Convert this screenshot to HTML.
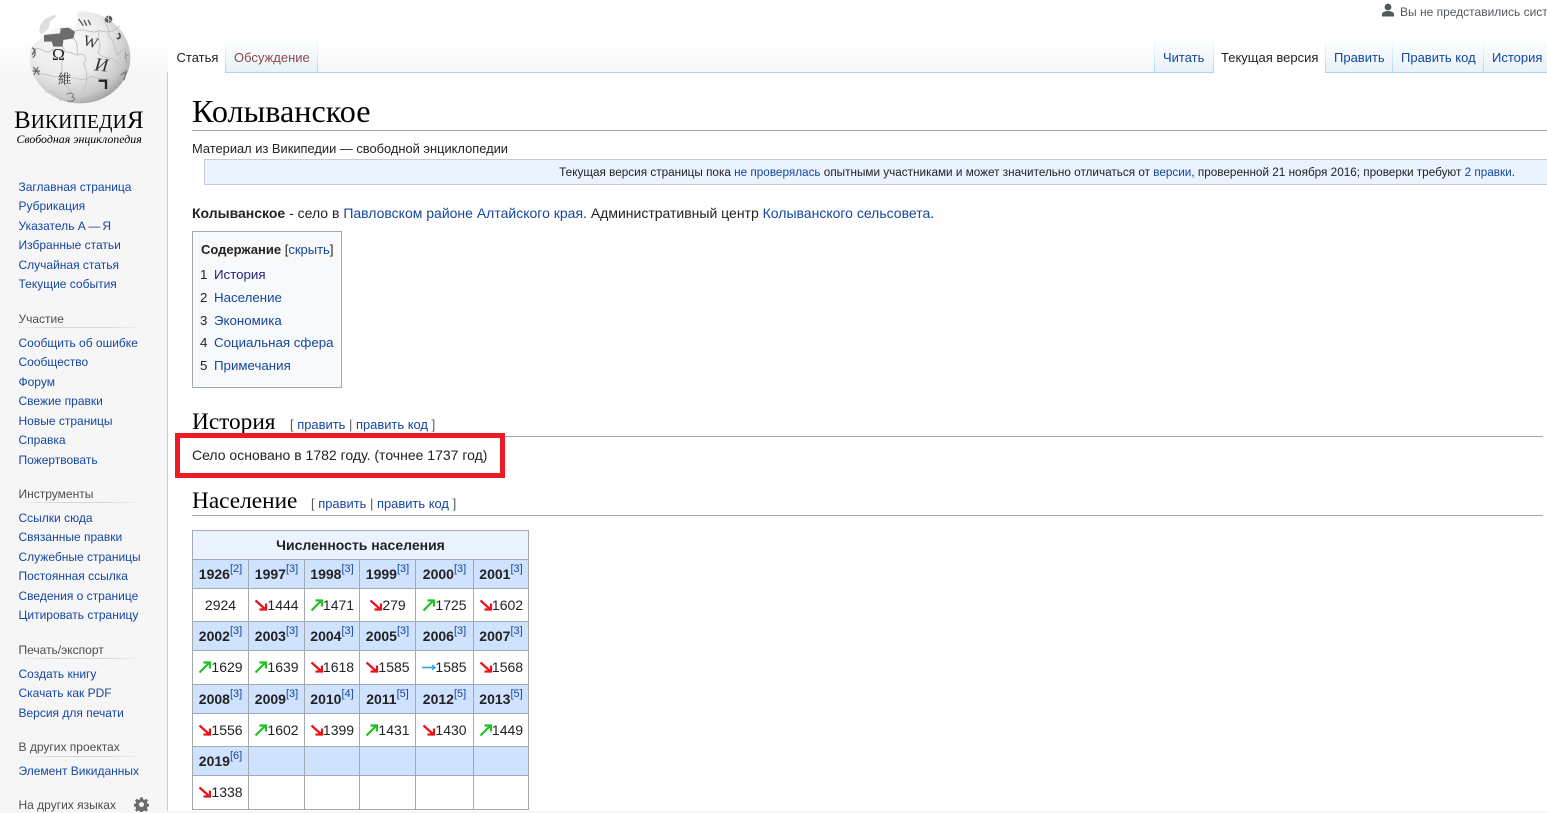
<!DOCTYPE html>
<html lang="ru"><head><meta charset="utf-8"><title>Колыванское — Википедия</title>
<style>
html,body{margin:0;padding:0;width:1547px;height:811px;overflow:hidden;background:#f6f6f6;font-family:"Liberation Sans",Arial,sans-serif;color:#222;}
a{color:#1547a0;text-decoration:none}
.t{position:absolute;white-space:nowrap;line-height:16px}
.s{font-size:12px;left:18.5px;color:#1547a0}
.h{font-size:12px;left:18.5px;color:#4d4d4d}
.l{position:absolute;left:18px;width:124px;height:1px;background:linear-gradient(90deg,#f6f6f6,#d5d5d5 30%,#d5d5d5 70%,#f6f6f6)}
.c{font-size:14px;color:#222}
.i{font-size:13.3px}
.sep{position:absolute;top:38px;width:1px;height:35px;background:linear-gradient(#fff,#a7d7f9)}
.tab{position:absolute;top:38px;height:34px;background:linear-gradient(#fff,#e8f2f8)}
.tabn{position:absolute;top:38px;height:35px;background:#fff}
.tt{font-size:13px;top:50px}
.serif{font-family:"Liberation Serif",serif;color:#000}
.e{font-size:12.95px;color:#54595d}
table{position:absolute;left:192px;top:530px;border-collapse:collapse;table-layout:fixed;width:337px;font-size:14px;background:#fff;color:#222}
td,th{border:1px solid #a2a9b1;padding:0;text-align:center;white-space:nowrap;overflow:hidden}
td.up{padding-bottom:2px}
th{background:#cfe3ff;font-weight:bold;color:#222}
th.top{background:#eaf3ff;font-size:14px}
sup{font-size:11px;font-weight:normal;line-height:0;color:#1547a0;position:relative;top:-1px;vertical-align:super}
svg.a{width:14px;height:14px;vertical-align:-2px;margin-right:-1px}
</style></head><body>

<!-- header gradient -->
<div style="position:absolute;left:0;top:0;width:1547px;height:80px;background:linear-gradient(#fff 45%,#f6f6f6)"></div>
<!-- content -->
<div style="position:absolute;left:167px;top:72px;width:1380px;height:739px;background:#fff;border-left:1px solid #a7d7f9;border-top:1px solid #a7d7f9;box-sizing:border-box"></div>

<!-- logo -->
<svg style="position:absolute;left:20px;top:5px" width="120" height="105" viewBox="0 0 360 315">
<defs><radialGradient id="g" cx="0.36" cy="0.32" r="0.78"><stop offset="0" stop-color="#fafafa"/><stop offset="0.5" stop-color="#ebebeb"/><stop offset="0.8" stop-color="#c8c8c8"/><stop offset="1" stop-color="#8f8f8f"/></radialGradient>
<clipPath id="cp"><path clip-rule="evenodd" d="M-10,-10H370V330H-10ZM-5,-5L174,-5L172,45L165,70L120,65L105,70L85,85L60,100L30,130L-5,130Z"/></clipPath></defs>
<ellipse cx="180" cy="157" rx="151" ry="138" fill="url(#g)" clip-path="url(#cp)"/>
<polygon points="60,62 75,42 105,28 108,35 90,50 85,72 65,88 58,80" fill="#dedede"/>
<polygon points="72,90 120,85 122,70 145,68 165,80 160,100 130,105 128,125 100,125 95,110 72,110" fill="#6c6c6c"/>
<g fill="none" stroke="#bdbdbd" stroke-width="2.500">
<path d="M160,100C178,115 166,130 175,150C192,140 206,160 190,176C202,195 206,225 190,262"/>
<path d="M40,135C60,120 72,146 90,140C105,125 116,136 130,142C150,136 160,150 175,150"/>
<path d="M128,125C142,140 118,150 130,162C118,182 134,192 120,214C126,232 146,250 158,268"/>
<path d="M165,78C195,68 215,90 240,76C262,86 282,80 300,62"/>
<path d="M238,78C228,104 250,120 234,142C250,165 272,152 290,170C302,186 314,186 322,180"/>
<path d="M50,210C75,198 95,222 120,214C155,208 185,238 215,214C240,224 262,218 288,236"/>
<path d="M252,40C254,58 272,70 266,94C290,112 278,134 296,150C302,130 318,130 326,136"/>
<path d="M75,262C95,250 112,270 122,288"/>
</g>
<text x="96" y="165" font-family="Liberation Serif" font-size="52" fill="#222">Ω</text>
<text x="190" y="126" font-family="Liberation Serif" font-size="46" fill="#333" transform="rotate(16 213 112)">W</text>
<text x="224" y="198" font-family="Liberation Serif" font-style="italic" font-size="56" fill="#333" transform="rotate(6 245 182)">И</text>
<text x="114" y="235" font-family="Noto Serif CJK SC" font-size="40" fill="#333">維</text>
<path d="M236,227H258V252" fill="none" stroke="#222" stroke-width="7"/>
<path d="M176,42L190,62M192,45L200,62M204,45L212,60" stroke="#555" stroke-width="4" fill="none"/>
<circle cx="266" cy="43" r="11" fill="#555"/><path d="M258,37L274,49M266,32V54" stroke="#ddd" stroke-width="2.500"/>
<path d="M296,84C304,94 300,102 290,100" fill="none" stroke="#444" stroke-width="5"/>
<path d="M36,128C48,134 48,152 38,158M46,132L36,150" stroke="#666" stroke-width="4" fill="none"/>
<path d="M40,186L58,208M54,186L42,210M38,198L60,198" stroke="#666" stroke-width="3.500" fill="none"/>
<path d="M316,140L320,172M326,146L312,160" stroke="#999" stroke-width="3" fill="none"/>
<path d="M140,268C152,260 168,268 156,276C172,280 160,292 142,288" stroke="#777" stroke-width="3" fill="none"/>
<path d="M302,210L318,200L312,226" stroke="#777" stroke-width="4" fill="none"/>
</svg>
<div class="t serif" style="left:14px;top:106px;font-size:25px;line-height:30px;"><span>В</span><span style="font-size:19.500px;letter-spacing:.25px">ИКИПЕДИ</span><span>Я</span></div>
<div class="t serif" style="left:16.500px;top:131px;font-size:11.900px;font-style:italic">Свободная энциклопедия</div>

<!-- sidebar -->
<span class="t s" style="top:179px">Заглавная страница</span>
<span class="t s" style="top:198px">Рубрикация</span>
<span class="t s" style="top:218px">Указатель А<span style="letter-spacing:-.7px"> — </span>Я</span>
<span class="t s" style="top:237px">Избранные статьи</span>
<span class="t s" style="top:257px">Случайная статья</span>
<span class="t s" style="top:276px">Текущие события</span>

<span class="t h" style="top:311px">Участие</span><div class="l" style="top:327px"></div>
<span class="t s" style="top:335px">Сообщить об ошибке</span>
<span class="t s" style="top:354px">Сообщество</span>
<span class="t s" style="top:374px">Форум</span>
<span class="t s" style="top:393px">Свежие правки</span>
<span class="t s" style="top:413px">Новые страницы</span>
<span class="t s" style="top:432px">Справка</span>
<span class="t s" style="top:452px">Пожертвовать</span>

<span class="t h" style="top:486px">Инструменты</span><div class="l" style="top:502px"></div>
<span class="t s" style="top:510px">Ссылки сюда</span>
<span class="t s" style="top:529px">Связанные правки</span>
<span class="t s" style="top:549px">Служебные страницы</span>
<span class="t s" style="top:568px">Постоянная ссылка</span>
<span class="t s" style="top:588px">Сведения о странице</span>
<span class="t s" style="top:607px">Цитировать страницу</span>

<span class="t h" style="top:642px">Печать/экспорт</span><div class="l" style="top:658px"></div>
<span class="t s" style="top:666px">Создать книгу</span>
<span class="t s" style="top:685px">Скачать как PDF</span>
<span class="t s" style="top:705px">Версия для печати</span>

<span class="t h" style="top:739px">В других проектах</span><div class="l" style="top:756px"></div>
<span class="t s" style="top:763px">Элемент Викиданных</span>
<span class="t h" style="top:797px">На других языках</span>
<svg style="position:absolute;left:134px;top:797px" width="15" height="15" viewBox="0 0 24 24"><path fill="#6b6b6b" d="M10 1h4l.6 3.200 2.200.9L19.500 3.300l2.800 2.800-1.800 2.700.9 2.200 3.200.6v4l-3.200.6-.9 2.200 1.800 2.700-2.800 2.800-2.700-1.800-2.200.9-.6 3.200h-4l-.6-3.200-2.200-.9-2.700 1.800-2.800-2.800 1.800-2.700-.9-2.200-3.200-.6v-4l3.200-.6.9-2.200-1.800-2.700 2.800-2.800 2.700 1.800 2.200-.9zM12 8.500a4 4 0 1 0 0 8 4 4 0 0 0 0-8z" transform="translate(0 -.5)"/></svg>

<!-- personal -->
<svg style="position:absolute;left:1381px;top:3px" width="14" height="14" viewBox="0 0 14 14"><circle cx="7" cy="4" r="3.400" fill="#54595d"/><path d="M1 13.500V11.500C1 9 4 8 7 8s6 1 6 3.500v2z" fill="#54595d"/></svg>
<span class="t" style="left:1400px;top:4px;font-size:12px;color:#54595d">Вы не представились сист</span>

<!-- tabs -->
<div class="tabn" style="left:168px;width:57px"></div>
<div class="tab" style="left:226px;width:91px"></div>
<div class="sep" style="left:225px"></div><div class="sep" style="left:317px"></div>
<div class="tab" style="left:1155px;width:58px"></div>
<div class="tabn" style="left:1214px;width:111px"></div>
<div class="tab" style="left:1326px;width:66px"></div>
<div class="tab" style="left:1393px;width:90px"></div>
<div class="tab" style="left:1484px;width:63px"></div>
<div class="sep" style="left:1154px"></div><div class="sep" style="left:1213px"></div><div class="sep" style="left:1325px"></div><div class="sep" style="left:1392px"></div><div class="sep" style="left:1483px"></div>
<span class="t tt" style="left:176.500px;color:#222">Статья</span>
<span class="t tt" style="left:234px;color:#8a4a4a">Обсуждение</span>
<span class="t tt" style="left:1163px;color:#1547a0">Читать</span>
<span class="t tt" style="left:1221px;color:#222">Текущая версия</span>
<span class="t tt" style="left:1334px;color:#1547a0">Править</span>
<span class="t tt" style="left:1401px;color:#1547a0">Править код</span>
<span class="t tt" style="left:1492px;color:#1547a0">История</span>

<!-- heading -->
<div class="t serif" style="left:192px;top:93px;font-size:32.200px;line-height:36px">Колыванское</div>
<div style="position:absolute;left:192px;top:130px;width:1355px;height:1px;background:#a2a9b1"></div>
<span class="t" style="left:192px;top:141px;font-size:12.880px;color:#222">Материал из Википедии — свободной энциклопедии</span>

<!-- notice -->
<div style="position:absolute;left:204px;top:159px;width:1350px;height:26px;box-sizing:border-box;background:#eaf3ff;border:1px solid #c8ccd1"></div>
<span class="t" style="right:32px;top:165px;font-size:11.740px;color:#222">Текущая версия страницы пока <a>не проверялась</a> опытными участниками и может значительно отличаться от <a>версии</a>, проверенной 21 ноября 2016; проверки требуют <a>2 правки</a>.</span>

<span class="t c" style="left:192px;top:205px"><b>Колыванское</b> - село в <a>Павловском районе</a> <a>Алтайского края</a>. Административный центр <a>Колыванского сельсовета</a>.</span>

<!-- toc -->
<div style="position:absolute;left:192px;top:231px;width:150px;height:157px;box-sizing:border-box;background:#f8f9fa;border:1px solid #a2a9b1"></div>
<span class="t" style="left:201px;top:241.500px;font-size:13px;color:#222"><b>Содержание</b> [<a>скрыть</a>]</span>
<span class="t c i" style="left:200px;top:267px">1</span><span class="t c i" style="left:214px;top:267px;color:#23237a">История</span>
<span class="t c i" style="left:200px;top:290px">2</span><span class="t c i" style="left:214px;top:290px;color:#1547a0">Население</span>
<span class="t c i" style="left:200px;top:313px">3</span><span class="t c i" style="left:214px;top:313px;color:#1547a0">Экономика</span>
<span class="t c i" style="left:200px;top:335px">4</span><span class="t c i" style="left:214px;top:335px;color:#1547a0">Социальная сфера</span>
<span class="t c i" style="left:200px;top:358px">5</span><span class="t c i" style="left:214px;top:358px;color:#1547a0">Примечания</span>

<!-- h2 -->
<div class="t serif" style="left:192px;top:409px;font-size:23.300px;line-height:26px">История</div>
<span class="t e" style="left:290px;top:417px">[ <a>править</a> | <a>править код</a> ]</span>
<div style="position:absolute;left:192px;top:436px;width:1351px;height:1px;background:#a2a9b1"></div>
<div style="position:absolute;left:175px;top:433px;width:330px;height:45px;box-sizing:border-box;border:5px solid #ed1c24;background:#fff"></div>
<span class="t c" style="left:192px;top:447px">Село основано в 1782 году. (точнее 1737 год)</span>
<div class="t serif" style="left:192px;top:488px;font-size:23.300px;line-height:26px">Население</div>
<span class="t e" style="left:311px;top:496px">[ <a>править</a> | <a>править код</a> ]</span>
<div style="position:absolute;left:192px;top:515px;width:1351px;height:1px;background:#a2a9b1"></div>

<!-- table -->
<svg width="0" height="0" style="position:absolute"><defs>
<symbol id="d" viewBox="0 0 14 14"><path d="M1.500 2.500L11 11M5.500 11.500H12V5.500" fill="none" stroke="#e8131b" stroke-width="2.200"/></symbol>
<symbol id="u" viewBox="0 0 14 14"><path d="M1.500 12.500L11 3M5.500 2.500H12V8.500" fill="none" stroke="#22c022" stroke-width="2.200"/></symbol>
<symbol id="r" viewBox="0 0 14 14"><path d="M0 7.500H13M10 5L13 7.500L10 10" fill="none" stroke="#2aa0e8" stroke-width="1.400"/></symbol>
</defs></svg>
<table>
<colgroup><col style="width:56px"><col style="width:56px"><col style="width:55px"><col style="width:56px"><col style="width:58px"><col style="width:55px"></colgroup>
<tr style="height:29px"><th colspan="6" class="top">Численность населения</th></tr>
<tr style="height:29px"><th>1926<sup>[2]</sup></th><th>1997<sup>[3]</sup></th><th>1998<sup>[3]</sup></th><th>1999<sup>[3]</sup></th><th>2000<sup>[3]</sup></th><th>2001<sup>[3]</sup></th></tr>
<tr style="height:33px"><td>2924</td><td><svg class="a"><use href="#d"/></svg>1444</td><td><svg class="a"><use href="#u"/></svg>1471</td><td><svg class="a"><use href="#d"/></svg>279</td><td><svg class="a"><use href="#u"/></svg>1725</td><td><svg class="a"><use href="#d"/></svg>1602</td></tr>
<tr style="height:29px"><th>2002<sup>[3]</sup></th><th>2003<sup>[3]</sup></th><th>2004<sup>[3]</sup></th><th>2005<sup>[3]</sup></th><th>2006<sup>[3]</sup></th><th>2007<sup>[3]</sup></th></tr>
<tr style="height:34px"><td class="up"><svg class="a"><use href="#u"/></svg>1629</td><td class="up"><svg class="a"><use href="#u"/></svg>1639</td><td class="up"><svg class="a"><use href="#d"/></svg>1618</td><td class="up"><svg class="a"><use href="#d"/></svg>1585</td><td class="up"><svg class="a"><use href="#r"/></svg>1585</td><td class="up"><svg class="a"><use href="#d"/></svg>1568</td></tr>
<tr style="height:29px"><th>2008<sup>[3]</sup></th><th>2009<sup>[3]</sup></th><th>2010<sup>[4]</sup></th><th>2011<sup>[5]</sup></th><th>2012<sup>[5]</sup></th><th>2013<sup>[5]</sup></th></tr>
<tr style="height:33px"><td><svg class="a"><use href="#d"/></svg>1556</td><td><svg class="a"><use href="#u"/></svg>1602</td><td><svg class="a"><use href="#d"/></svg>1399</td><td><svg class="a"><use href="#u"/></svg>1431</td><td><svg class="a"><use href="#d"/></svg>1430</td><td><svg class="a"><use href="#u"/></svg>1449</td></tr>
<tr style="height:29px"><th>2019<sup>[6]</sup></th><th></th><th></th><th></th><th></th><th></th></tr>
<tr style="height:34px"><td class="up"><svg class="a"><use href="#d"/></svg>1338</td><td></td><td></td><td></td><td></td><td></td></tr>
</table>
</body></html>
